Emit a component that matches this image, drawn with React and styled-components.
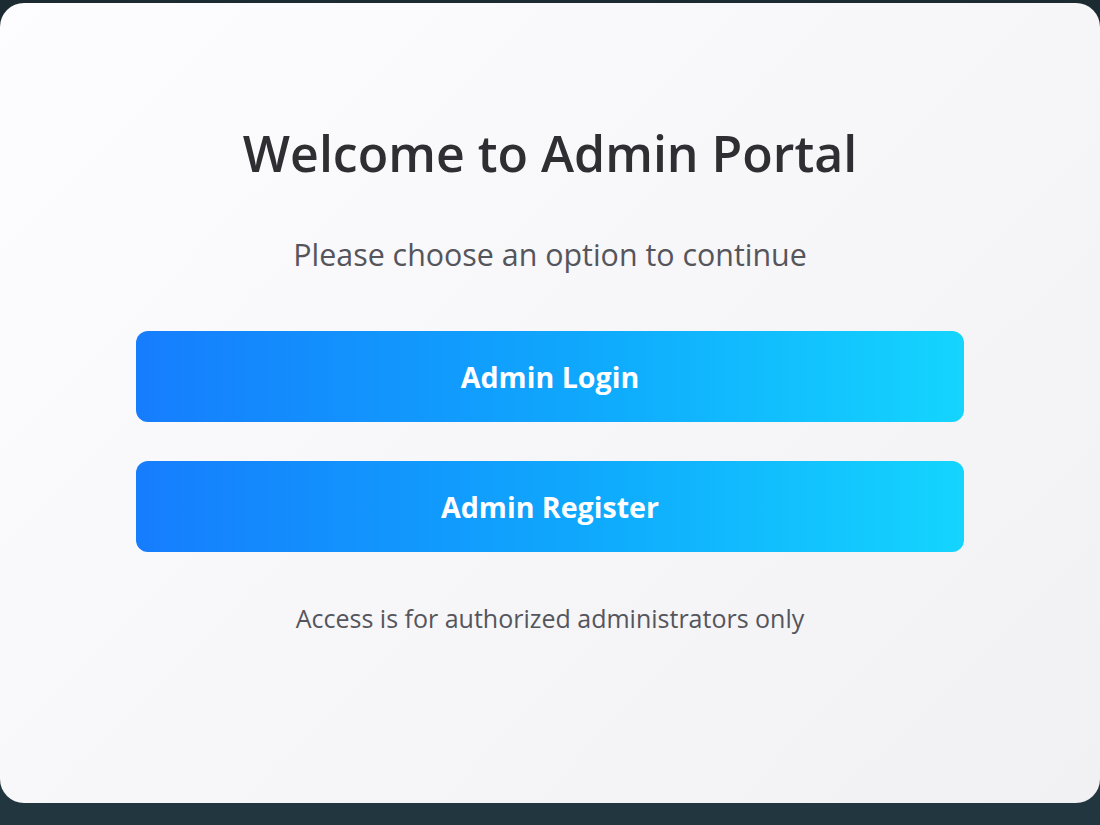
import React from 'react'
import styled, { createGlobalStyle } from 'styled-components'

const GlobalStyle = createGlobalStyle`
  html, body {
    margin: 0;
    padding: 0;
    background: #1f2f37;
    font-family: "Open Sans", "Noto Sans", sans-serif;
  }
`

const Page = styled.div`
  width: 1100px;
  height: 825px;
  overflow: hidden;
  background: linear-gradient(180deg, #1c2a32 0%, #22363f 100%);
  padding-top: 3px;
  box-sizing: border-box;
`

const Card = styled.main`
  width: 1100px;
  height: 800px;
  box-sizing: border-box;
  border-radius: 24px;
  background: linear-gradient(135deg, #fdfcfe 0%, #f7f6f9 50%, #f1f0f3 100%);
  display: flex;
  flex-direction: column;
  align-items: center;
  padding-top: 118px;
`

const Title = styled.h1`
  margin: 0;
  font-size: 50px;
  font-weight: 600;
  color: #2f2f33;
  line-height: 1.3;
`

const Subtitle = styled.p`
  margin: 49px 0 0;
  font-size: 30.4px;
  color: #55555c;
  line-height: 1.3;
`

const Actions = styled.div`
  margin-top: 56px;
  width: 828px;
  display: flex;
  flex-direction: column;
  gap: 39px;
`

const ActionButton = styled.button`
  height: 91px;
  border: none;
  border-radius: 12px;
  background: linear-gradient(90deg, #167dfd 0%, #0fa9fd 55%, #14d5fe 100%);
  color: #fff;
  font-family: inherit;
  font-size: 28.6px;
  font-weight: 700;
  cursor: pointer;
`

const Note = styled.p`
  margin: 50px 0 0;
  font-size: 25px;
  color: #55555c;
  line-height: 1.3;
`

export default function App() {
  return (
    <Page>
      <GlobalStyle />
      <Card>
        <Title>Welcome to Admin Portal</Title>
        <Subtitle>Please choose an option to continue</Subtitle>
        <Actions>
          <ActionButton>Admin Login</ActionButton>
          <ActionButton>Admin Register</ActionButton>
        </Actions>
        <Note>Access is for authorized administrators only</Note>
      </Card>
    </Page>
  )
}
